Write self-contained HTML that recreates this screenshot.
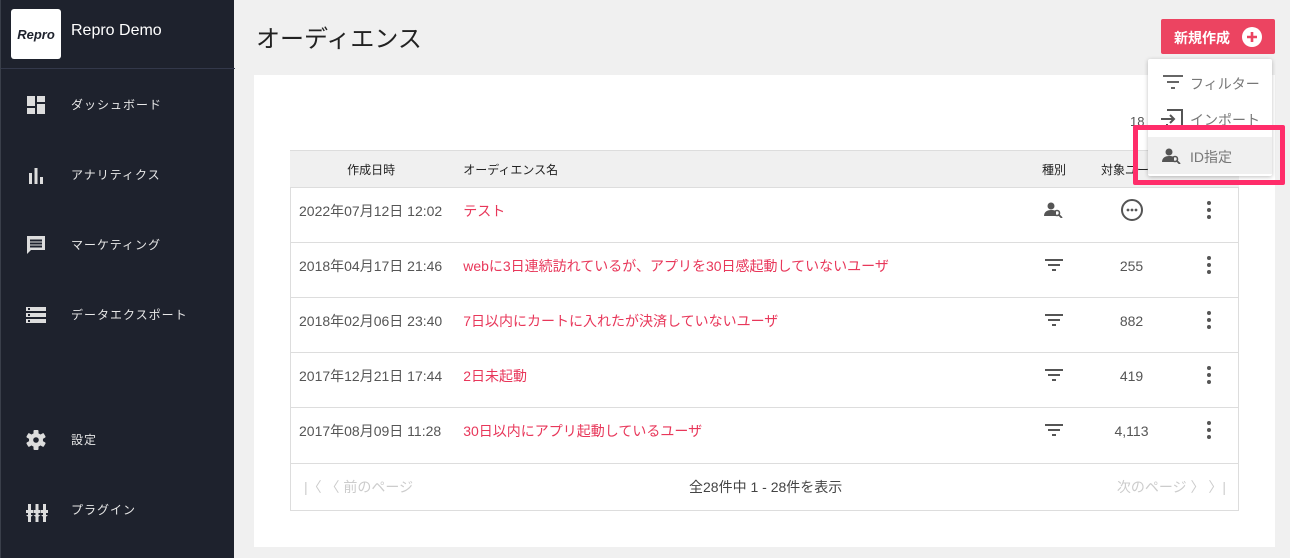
<!DOCTYPE html>
<html><head><meta charset="utf-8">
<style>
*{box-sizing:border-box;margin:0;padding:0}
body{width:1290px;height:558px;overflow:hidden;background:#f0f0f0;font-family:"Liberation Sans","Noto Sans CJK JP",sans-serif;position:relative}
.sb{position:absolute;left:0;top:0;width:234px;height:558px;background:#1e222d;border-left:1px solid #3a3f4a}
.logo{position:absolute;left:10px;top:9px;width:50px;height:50px;background:#fff;border-radius:3px;font:italic 900 13px "Liberation Sans",sans-serif;color:#1e222d;display:flex;align-items:center;justify-content:center}
.brand{position:absolute;left:70px;top:22px;color:#fff;font-size:16px}
.sep{position:absolute;left:0;top:68px;width:234px;height:1px;background:#33384a}
.ni{position:absolute;left:0;width:234px;height:30px;color:#e8e8e8;font-size:12px;letter-spacing:1px}
.ni svg{position:absolute;left:25px;top:5px}
.ni span{position:absolute;left:70px;top:6px}
h1{position:absolute;left:256px;top:19px;font-size:24px;font-weight:400;color:#222}
.card{position:absolute;left:254px;top:75px;width:1021px;height:472px;background:#fff}
table{position:absolute;left:290px;top:150px;width:949px;border-collapse:collapse;font-size:14px;color:#555}
td,th{border-top:1px solid #ddd;white-space:nowrap}
th{height:37px;background:#f0f0f0;font-weight:400;color:#222;font-size:12px}
td{height:55px;padding-bottom:8px}
.red{color:#e8375a;font-size:14px}
.tb{position:absolute;left:290px;top:150px;width:949px;height:361px;border:1px solid #ddd}
.foot{position:absolute;left:291px;top:463px;width:947px;height:47px;font-size:14px}
.btn{position:absolute;left:1161px;top:19px;width:114px;height:35px;background:#ec4461;border-radius:2px;color:#fff;font-size:14px;font-weight:700}
.dd{position:absolute;left:1148px;top:59px;width:124px;height:117px;background:#fff;box-shadow:0 1px 4px rgba(0,0,0,.25);border-radius:2px;font-size:14px;color:#777}
.hl{position:absolute;left:1133px;top:125px;width:152px;height:60px;border:5px solid #ff2d6a;border-radius:2px}
</style></head><body>
<div class="sb">
 <div class="logo">Repro</div>
 <div class="brand">Repro Demo</div>
 <div class="sep"></div>
 <div class="ni" style="top:90px"><svg width="20" height="20"><path d="M1 1h8v10H1zM11 1h8v6h-8zM11 9h8v10h-8zM1 13h8v6H1z" fill="#ddd"/></svg><span>ダッシュボード</span></div>
 <div class="ni" style="top:160px"><svg width="20" height="20"><path d="M3 8h3v11H3zM8.5 3h3v16h-3zM14 12h3v7h-3z" fill="#ddd"/></svg><span>アナリティクス</span></div>
 <div class="ni" style="top:230px"><svg width="20" height="20"><path d="M1 1h18v14H5l-4 4zM4 4.5h12v2H4zM4 7.5h12v2H4zM4 10.5h12v2H4z" fill="#ddd" fill-rule="evenodd"/></svg><span>マーケティング</span></div>
 <div class="ni" style="top:300px"><svg width="20" height="20"><path d="M0 2h20v4H0zM0 8h20v4H0zM0 14h20v4H0z" fill="#ddd"/><path d="M2 3h2v2H2zM2 9h2v2H2zM2 15h2v2H2z" fill="#1e222d"/></svg><span>データエクスポート</span></div>
 <div class="ni" style="top:425px"><svg width="20" height="20"><g fill="#ddd"><rect x="7.5" y="0" width="5" height="20" rx="1"/><rect x="7.5" y="0" width="5" height="20" rx="1" transform="rotate(60 10 10)"/><rect x="7.5" y="0" width="5" height="20" rx="1" transform="rotate(120 10 10)"/><circle cx="10" cy="10" r="7"/></g><circle cx="10" cy="10" r="2.8" fill="#1e222d"/></svg><span>設定</span></div>
 <div class="ni" style="top:495px"><svg width="22" height="24"><g fill="#ddd"><path d="M2 4h3v18H2zM9.5 4h3v18h-3zM17 4h3v18h-3z"/><path d="M0 10h7v3H0zM7.5 10h7v3h-7zM15 10h7v3h-7zM0 15h7l-3.5 3zM7.5 15h7L11 18zM15 15h7l-3.5 3z"/></g></svg><span>プラグイン</span></div>
</div>
<h1>オーディエンス</h1>
<div class="card"></div>
<div style="position:absolute;left:1130px;top:114px;font-size:13px;color:#555">18</div>
<div class="tb"></div>
<table>
<tr><th style="width:151px;padding-left:10px">作成日時</th><th style="text-align:left;padding-left:21px">オーディエンス名</th><th style="width:60px">種別</th><th style="width:95px;text-align:left;padding-left:17px">対象ユーザ</th><th style="width:60px"></th></tr>
<tr><td style="padding-left:9px">2022年07月12日 12:02</td><td class="red" style="padding-left:21px">テスト</td><td style="text-align:center"><svg width="20" height="16"><circle cx="7" cy="4" r="3.5" fill="#555"/><path d="M0 14c0-4 3-6 7-6s5 1 5 1v5z" fill="#555"/><circle cx="13" cy="11" r="2.5" fill="none" stroke="#555" stroke-width="1.6"/><path d="M15 13l3 3" stroke="#555" stroke-width="1.8"/></svg></td><td style="text-align:center"><svg width="24" height="24"><circle cx="12" cy="12" r="10" fill="none" stroke="#555" stroke-width="2"/><circle cx="8" cy="12" r="1.4" fill="#555"/><circle cx="12" cy="12" r="1.4" fill="#555"/><circle cx="16" cy="12" r="1.4" fill="#555"/></svg></td><td style="text-align:center"><svg width="4" height="18"><circle cx="2" cy="2" r="2" fill="#555"/><circle cx="2" cy="9" r="2" fill="#555"/><circle cx="2" cy="16" r="2" fill="#555"/></svg></td></tr>
<tr><td style="padding-left:9px">2018年04月17日 21:46</td><td class="red" style="padding-left:21px">webに3日連続訪れているが、アプリを30日感起動していないユーザ</td><td style="text-align:center"><svg width="18" height="12"><path d="M0 0h18v2H0zM3 5h12v2H3zM7 10h4v2H7z" fill="#555"/></svg></td><td style="text-align:center">255</td><td style="text-align:center"><svg width="4" height="18"><circle cx="2" cy="2" r="2" fill="#555"/><circle cx="2" cy="9" r="2" fill="#555"/><circle cx="2" cy="16" r="2" fill="#555"/></svg></td></tr>
<tr><td style="padding-left:9px">2018年02月06日 23:40</td><td class="red" style="padding-left:21px">7日以内にカートに入れたが決済していないユーザ</td><td style="text-align:center"><svg width="18" height="12"><path d="M0 0h18v2H0zM3 5h12v2H3zM7 10h4v2H7z" fill="#555"/></svg></td><td style="text-align:center">882</td><td style="text-align:center"><svg width="4" height="18"><circle cx="2" cy="2" r="2" fill="#555"/><circle cx="2" cy="9" r="2" fill="#555"/><circle cx="2" cy="16" r="2" fill="#555"/></svg></td></tr>
<tr><td style="padding-left:9px">2017年12月21日 17:44</td><td class="red" style="padding-left:21px">2日未起動</td><td style="text-align:center"><svg width="18" height="12"><path d="M0 0h18v2H0zM3 5h12v2H3zM7 10h4v2H7z" fill="#555"/></svg></td><td style="text-align:center">419</td><td style="text-align:center"><svg width="4" height="18"><circle cx="2" cy="2" r="2" fill="#555"/><circle cx="2" cy="9" r="2" fill="#555"/><circle cx="2" cy="16" r="2" fill="#555"/></svg></td></tr>
<tr><td style="padding-left:9px">2017年08月09日 11:28</td><td class="red" style="padding-left:21px">30日以内にアプリ起動しているユーザ</td><td style="text-align:center"><svg width="18" height="12"><path d="M0 0h18v2H0zM3 5h12v2H3zM7 10h4v2H7z" fill="#555"/></svg></td><td style="text-align:center">4,113</td><td style="text-align:center"><svg width="4" height="18"><circle cx="2" cy="2" r="2" fill="#555"/><circle cx="2" cy="9" r="2" fill="#555"/><circle cx="2" cy="16" r="2" fill="#555"/></svg></td></tr>
</table>
<div class="foot" style="border-top:1px solid #ddd">
 <span style="position:absolute;left:13px;top:13px;color:#ccc">|〈 〈 前のページ</span>
 <span style="position:absolute;left:398px;top:13px;color:#444">全28件中 1 - 28件を表示</span>
 <span style="position:absolute;right:12px;top:13px;color:#ccc">次のページ 〉 〉|</span>
</div>
<div class="btn"><span style="position:absolute;left:13px;top:9px">新規作成</span><svg style="position:absolute;left:81px;top:8px" width="20" height="20"><circle cx="10" cy="10" r="10" fill="#fff"/><path d="M5 10h10M10 5v10" stroke="#ec4461" stroke-width="2.6"/></svg></div>
<div class="dd">
 <svg style="position:absolute;left:15px;top:16px" width="20" height="14"><path d="M0 0h20v2H0zM4 6h12v2H4zM8 12h4v2H8z" fill="#666"/></svg>
 <span style="position:absolute;left:42px;top:15px">フィルター</span>
 <svg style="position:absolute;left:13px;top:50px" width="22" height="20"><path d="M6 1h15v18H6v-4" fill="none" stroke="#555" stroke-width="2"/><path d="M0 10h13M9 6l4 4-4 4" fill="none" stroke="#555" stroke-width="2"/></svg>
 <span style="position:absolute;left:42px;top:51px">インポート</span>
 <div style="position:absolute;left:0;top:78px;width:124px;height:37px;background:#f0f0f0"></div>
 <svg style="position:absolute;left:14px;top:89px" width="20" height="16"><circle cx="7" cy="4" r="3.5" fill="#555"/><path d="M0 14c0-4 3-6 7-6s5 1 5 1v5z" fill="#555"/><circle cx="13" cy="11" r="2.5" fill="none" stroke="#555" stroke-width="1.6"/><path d="M15 13l3 3" stroke="#555" stroke-width="1.8"/></svg>
 <span style="position:absolute;left:42px;top:88px;font-size:14px">ID指定</span>
</div>
<div class="hl"></div>
</body></html>
